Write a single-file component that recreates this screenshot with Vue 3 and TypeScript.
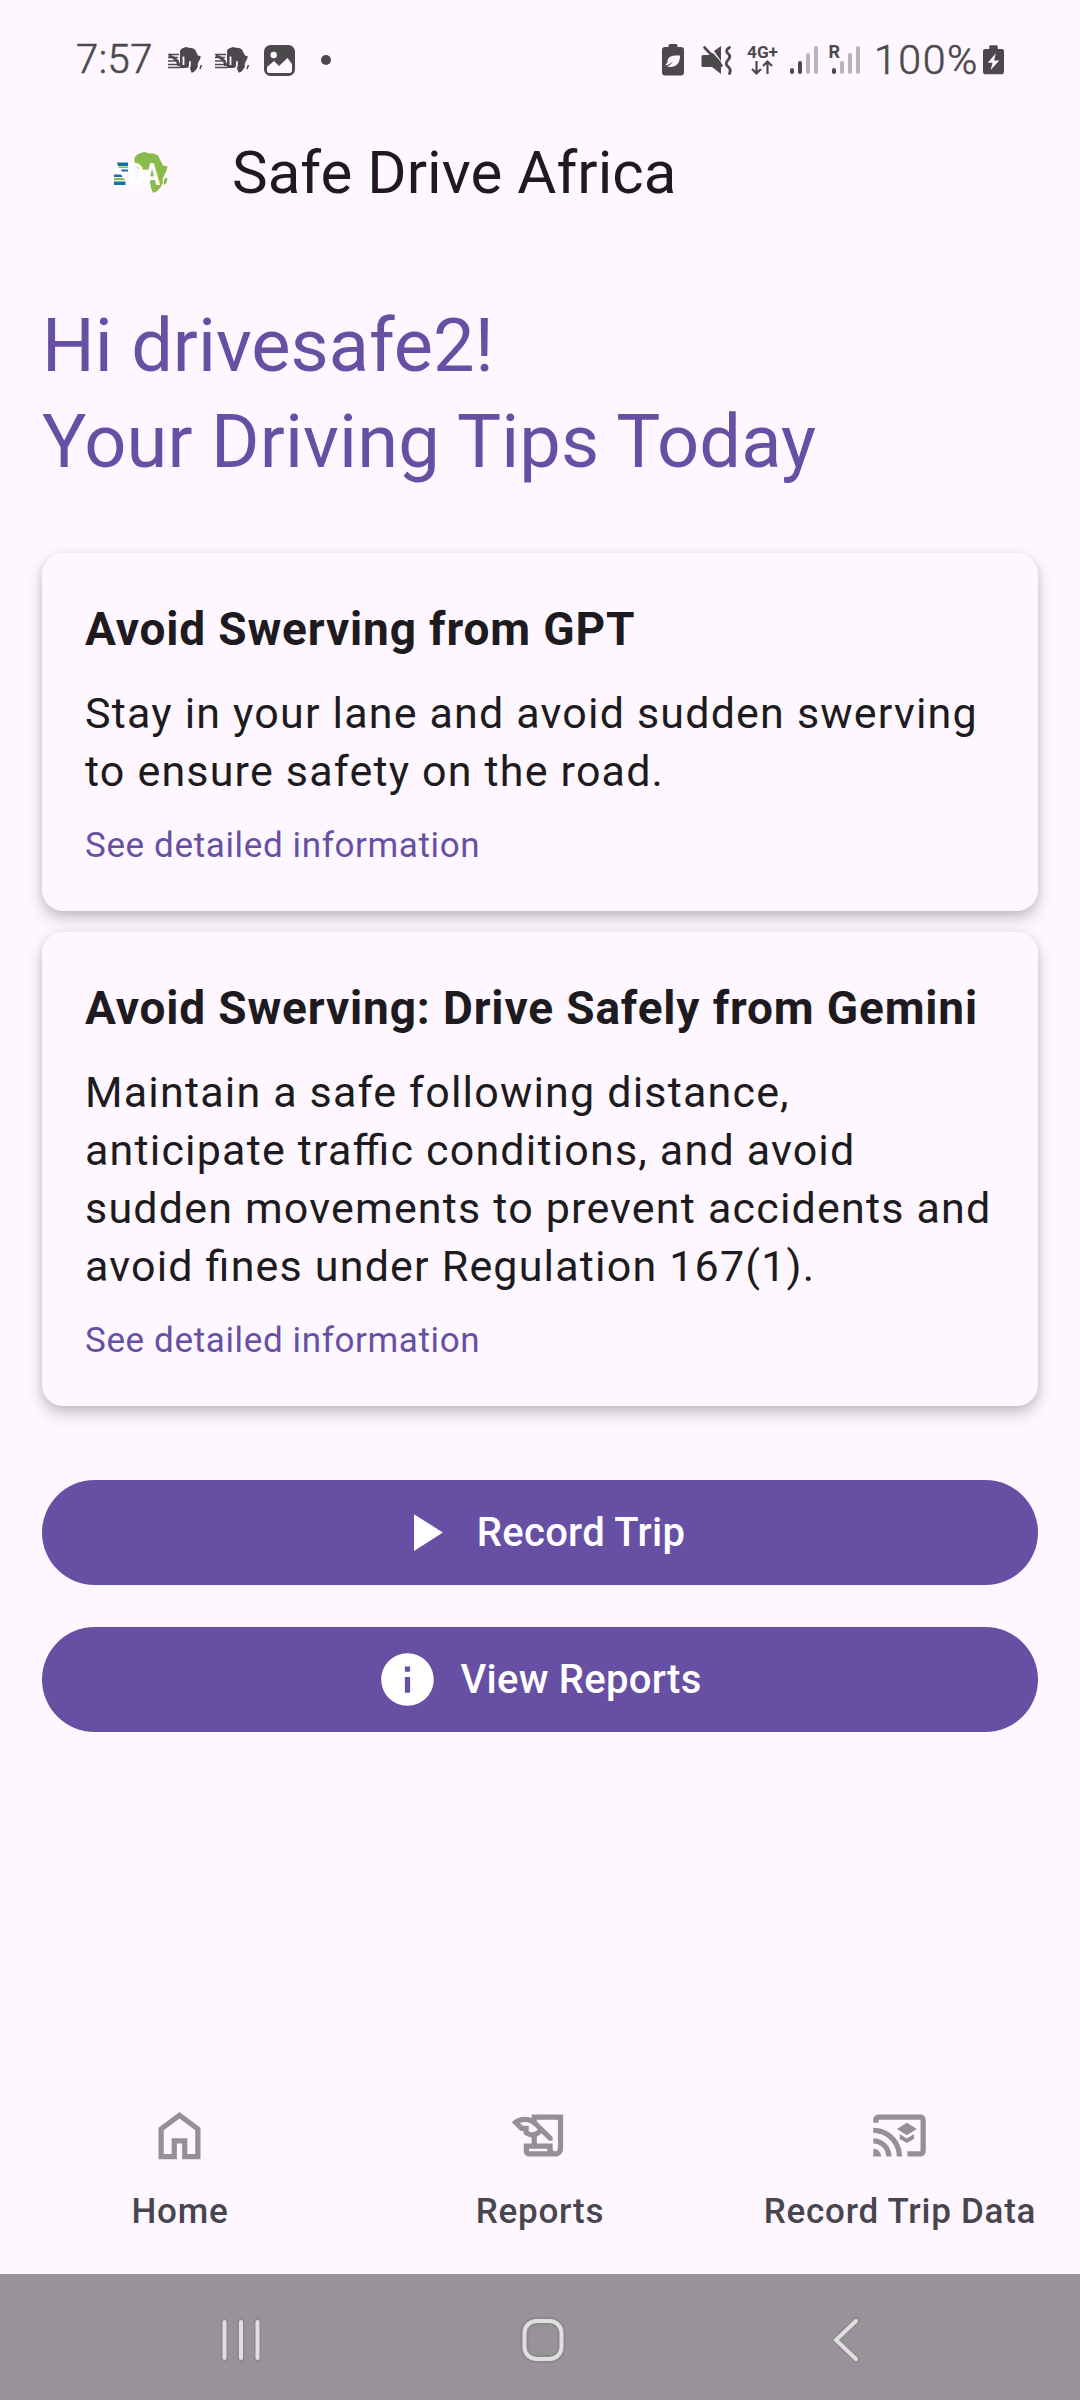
<script setup lang="ts">
interface Tip {
  title: string
  lines: string[]
}

const tips: Tip[] = [
  {
    title: 'Avoid Swerving from GPT',
    lines: ['Stay in your lane and avoid sudden swerving', 'to ensure safety on the road.']
  },
  {
    title: 'Avoid Swerving: Drive Safely from Gemini',
    lines: [
      'Maintain a safe following distance,',
      'anticipate traffic conditions, and avoid',
      'sudden movements to prevent accidents and',
      'avoid fines under Regulation 167(1).'
    ]
  }
]

interface Action {
  label: string
  icon: string
}

const actions: Action[] = [
  { label: 'Record Trip', icon: 'M8 5v14l11-7z' },
  {
    label: 'View Reports',
    icon: 'M12 2C6.48 2 2 6.48 2 12s4.48 10 10 10 10-4.48 10-10S17.52 2 12 2zm1 15h-2v-6h2v6zm0-8h-2V7h2v2z'
  }
]

const tabs: Action[] = [
  { label: 'Home', icon: 'M6 19h3v-6h6v6h3v-9l-6-4.5L6 10v9zm-2 2V9l8-6 8 6v12h-7v-6h-2v6H4z' },
  {
    label: 'Reports',
    icon: 'M9 4v1.38c-.83-.33-1.72-.5-2.61-.5-1.79 0-3.58.68-4.95 2.05l3.33 3.33h1.11v1.11c.86.86 1.98 1.31 3.11 1.36V15H6v3c0 1.1.9 2 2 2h10c1.66 0 3-1.34 3-3V4H9zm-1.11 6.41V8.26H5.61L4.57 7.22a5.07 5.07 0 0 1 1.82-.34c1.34 0 2.59.52 3.54 1.46l1.41 1.41-.2.2c-.51.51-1.19.8-1.92.8-.47 0-.93-.12-1.33-.34zM19 17c0 .55-.45 1-1 1s-1-.45-1-1v-2h-6v-2.59c.57-.23 1.1-.57 1.56-1.03l.2-.2L15.59 14H17v-1.41l-6-5.97V6h8v11zM8 17h7v1H8z'
  },
  {
    label: 'Record Trip Data',
    icon: 'M4 4h16c1.1 0 2 .9 2 2v12c0 1.1-.9 2-2 2h-5v-2h5V6H4v1.1H2V6c0-1.1.9-2 2-2zM2 17v3h3c0-1.66-1.34-3-3-3zM2 13v2c2.76 0 5 2.24 5 5h2c0-3.87-3.13-7-7-7zM2 9v2c4.97 0 9 4.03 9 9h2c0-6.08-4.92-11-11-11zM14.8 7.1L11 9.5l3.8 2.4 3.8-2.4zM12.1 11.4l2.7 1.7 2.7-1.7v1.9l-2.7 1.6-2.7-1.6z'
  }
]

const africa =
  'M0 9.500L0 5.500L3 2.500L6 1L10 0L14 1.200L19 1.400L23.500 3.500L26 8.500L28.500 13.500L33 14.500L32 19L29.500 23.500L28 27.500L28.500 31L25.500 36L22 39.500L18.500 41L16.500 36L15.500 30L16.500 26L14.500 21.500L13.500 17.500L5 18L1.500 14.500Z'
</script>

<template>
  <div class="screen">
    <header class="status">
      <span class="clock">7:57</span>
      <svg v-for="n in 2" :key="n" class="sda" viewBox="0 0 36 26">
        <path d="M1 7.500h11M1 10.500h10M1 14h11M1 17.500h12M1 20.500h12" stroke="#4c494d" stroke-width="1.700" />
        <path d="M2 8.500q10 4 9.500 10.500" stroke="#4c494d" stroke-width="2.600" fill="none" />
        <g transform="translate(13 0) scale(.63)"><path :d="africa" fill="#4c494d" /></g>
        <path d="M13 6.500h6q3 0 3 3v8.500q0 3-3 3h-6z" fill="#4c494d" />
        <path d="M16.500 9.500v8.500" stroke="#fef7ff" stroke-width="1.800" />
        <path d="M23.200 20v-6" stroke="#fef7ff" stroke-width="1" />
        <path d="M34.500 18l-1.500 4" stroke="#4c494d" stroke-width="1.600" />
      </svg>
      <svg class="photo" viewBox="0 0 31 31">
        <rect width="31" height="31" rx="6.500" fill="#4c494d" />
        <circle cx="9.700" cy="10" r="3.200" fill="#fef7ff" />
        <path d="M3 22l7-6 5 5 8.500-8 4.500 6v6.500q0 2.500-2.500 2.500h-20q-2.500 0-2.500-2.500z" fill="#fef7ff" />
      </svg>
      <span class="dot"></span>
      <span class="spacer"></span>
      <svg class="saver" viewBox="0 0 22 32">
        <path d="M6.500 3V1.500Q6.500 0 8 0h6q1.500 0 1.500 1.500V3H19q3 0 3 3v22.500q0 3-3 3H3q-3 0-3-3V6q0-3 3-3z" fill="#4c494d" />
        <path d="M18 11.500c-8-.5-13 1-12.500 7L3 21.500c4-.5 5-2 8-4-2 3-4 4-6 5 7 1.500 13-1 13-11z" fill="#fef7ff" />
      </svg>
      <svg class="mute" viewBox="0 0 31 31" fill="none" stroke="#4c494d" stroke-width="2.600" stroke-linecap="round">
        <path d="M2 10h7l3-2 8 9v12l-9-7H2q-1.500 0-1.500-1.500v-9Q.5 10 2 10z" fill="#4c494d" stroke="none" />
        <path d="M13 6l7-5v15z" fill="#4c494d" stroke="none" />
        <path d="M3.500 2.500l17 18" />
        <path d="M28.500 2.500q-5 3-1.500 6t0 6.500 0 6.500 1.500 7" stroke-width="2.800" />
      </svg>
      <svg class="net" viewBox="0 0 31 31">
        <text x="0" y="12.600" font-size="17" font-weight="700" textLength="31" lengthAdjust="spacingAndGlyphs">4G+</text>
        <path d="M9.500 16v12M5 24l4.500 4.500 4.500-4.500M20.500 29V17M16 21l4.500-4.500 4.500 4.500" fill="none" stroke="#4c494d" stroke-width="2.200" />
      </svg>
      <svg class="signal" viewBox="0 0 28 30" stroke-width="4" stroke-linecap="round">
        <path d="M2 25v2M10 18v9" stroke="#4c494d" />
        <path d="M18 10v17M26 3v24" stroke="#b9b4ba" />
      </svg>
      <svg class="roam" viewBox="0 0 31 30" stroke-width="4" stroke-linecap="round">
        <path d="M5 25v2" stroke="#4c494d" />
        <path d="M13 18v9M21 10v17M29 3v24" stroke="#b9b4ba" />
        <text x="-.5" y="12.800" font-size="18" font-weight="700">R</text>
      </svg>
      <span class="percent">100%</span>
      <svg class="charge" viewBox="0 0 22 31">
        <path d="M6.500 4V1.500Q6.500 0 8 0h6q1.500 0 1.500 1.500V4H20q2 0 2 2v21.500q0 3-3 3H3q-3 0-3-3V6q0-2 2-2z" fill="#4c494d" />
        <path d="M13.500 8.500L5 18.500h5l-2 7.500 9-10h-5.500z" fill="#fef7ff" />
      </svg>
    </header>

    <div class="appbar">
      <svg class="logo" viewBox="0 0 54 42">
        <g transform="translate(20.500 0)"><path :d="africa" fill="#8bba4c" /></g>
        <path d="M50 27l3.500-1.500-1 5.500-2.500 2z" fill="#8bba4c" />
        <text x="0" y="33" font-size="32" font-weight="700" textLength="46" lengthAdjust="spacingAndGlyphs" class="logo-text">SDA</text>
        <path d="M3 10.500h11v3.500H4zM7 17.500h7v2H8zM0 22.500h7l1.500 2.500H0zM0 29.500h11.500v3.500H0z" fill="#1272a5" />
        <path d="M4 14.500h10v1.500H5zM0 26h9l2.500 2.200H0z" fill="#8bba4c" />
      </svg>
      <span class="app-title">Safe Drive Africa</span>
    </div>

    <main class="content">
      <h1><span>Hi drivesafe2!</span><span class="wide">Your Driving Tips Today</span></h1>

      <section class="tips">
        <article v-for="tip in tips" :key="tip.title" class="card">
          <h2>{{ tip.title }}</h2>
          <p><span v-for="line in tip.lines" :key="line">{{ line }}</span></p>
          <a>See detailed information</a>
        </article>
      </section>

      <div class="actions">
        <button v-for="a in actions" :key="a.label" type="button">
          <svg viewBox="0 0 24 24"><path :d="a.icon" fill="#fff" /></svg>
          <span>{{ a.label }}</span>
        </button>
      </div>
    </main>

    <nav class="tabs">
      <div v-for="t in tabs" :key="t.label" class="tab">
        <svg viewBox="0 0 24 24"><path :d="t.icon" fill="#958f96" fill-rule="evenodd" /></svg>
        <span>{{ t.label }}</span>
      </div>
    </nav>

    <footer class="system">
      <svg class="recents" viewBox="0 0 44 50" fill="none" stroke-linecap="round">
        <path d="M5.500 7v36M22 7v36M38.500 7v36" stroke="#8d888d" stroke-width="7" />
        <path d="M5.500 7v36M22 7v36M38.500 7v36" stroke="#e0dfe0" stroke-width="4" />
      </svg>
      <svg class="home" viewBox="0 0 50 50" fill="none">
        <rect x="6.500" y="6" width="37" height="38" rx="12" stroke="#8d888d" stroke-width="8" />
        <rect x="6.500" y="6" width="37" height="38" rx="12" stroke="#e0dfe0" stroke-width="4" />
      </svg>
      <svg class="back" viewBox="0 0 34 50" fill="none" stroke-linecap="round">
        <path d="M27 6L7 25l20 19" stroke="#8d888d" stroke-width="7" />
        <path d="M27 6L7 25l20 19" stroke="#e0dfe0" stroke-width="4" />
      </svg>
    </footer>
  </div>
</template>

<style>
body {
  background: #fef7ff;
}
</style>

<style scoped>
.screen {
  display: flex;
  flex-direction: column;
  width: 1080px;
  height: 2400px;
  background: #fef7ff;
  color: #1d1b20;
  font-family: Roboto, sans-serif;
  overflow: hidden;
}
svg {
  display: block;
  flex: none;
  overflow: visible;
}
.status {
  display: flex;
  align-items: center;
  height: 120px;
  padding: 0 76px 0 76px;
  box-sizing: border-box;
  color: #4c494d;
}
.status text {
  fill: #4c494d;
  stroke: none;
}
.clock,
.percent {
  font-size: 40px;
  line-height: 40px;
  font-weight: 300;
  -webkit-text-stroke: 0.6px #4c494d;
  white-space: nowrap;
  margin-top: -1px;
}
.clock {
  width: 91px;
  letter-spacing: 0.5px;
}
.sda {
  width: 36px;
  height: 26px;
  margin-right: 11px;
}
.photo {
  width: 31px;
  height: 31px;
  margin-left: 3px;
}
.dot {
  width: 10px;
  height: 10px;
  margin-left: 26px;
  border-radius: 50%;
  background: #4c494d;
}
.spacer {
  flex: 1;
}
.saver {
  width: 22px;
  height: 32px;
  margin-right: 17px;
}
.mute {
  width: 31px;
  height: 31px;
  margin-right: 15px;
}
.net {
  width: 31px;
  height: 31px;
  margin-right: 12px;
}
.signal {
  width: 28px;
  height: 30px;
  margin-right: 11px;
}
.roam {
  width: 31px;
  height: 30px;
  margin-right: 14px;
}
.percent {
  width: 109px;
  font-size: 41px;
  letter-spacing: 1.6px;
}
.charge {
  width: 21px;
  height: 30px;
}
.appbar {
  display: flex;
  align-items: flex-start;
  height: 178px;
  padding: 23px 0 0 114px;
  box-sizing: border-box;
}
.logo {
  width: 54px;
  height: 42px;
  margin: 9px 64px 0 0;
}
.logo-text {
  fill: #fff;
}
.app-title {
  font-size: 60px;
  line-height: 60px;
  letter-spacing: 0.04px;
}
.content {
  flex: 1;
  padding: 0 42px;
}
h1 {
  margin: 0 0 63px;
  font-size: 74px;
  line-height: 96px;
  font-weight: 400;
  color: #6750a4;
}
h1 span {
  display: block;
}
h1 .wide {
  letter-spacing: 0.12px;
}
.tips {
  display: flex;
  flex-direction: column;
  gap: 21px;
}
.card {
  display: flex;
  flex-direction: column;
  gap: 21px;
  padding: 42px 42px 42px 43px;
  border-radius: 21px;
  background: #fef7ff;
  white-space: nowrap;
  font-feature-settings: 'liga' 1;
  box-shadow: 0 8px 16px rgba(0, 0, 0, 0.19), 0 2px 8px rgba(0, 0, 0, 0.1);
}
h2 {
  margin: 0;
  font-size: 46px;
  line-height: 68px;
  font-weight: 700;
  letter-spacing: 0.85px;
}
.card p {
  margin: 0;
  font-size: 43px;
  line-height: 58px;
  letter-spacing: 1.19px;
}
.card p span {
  display: block;
}
.card a {
  padding-top: 1px;
  font-size: 35px;
  line-height: 47px;
  letter-spacing: 0.63px;
  color: #6750a4;
}
.actions {
  display: flex;
  flex-direction: column;
  gap: 42px;
  margin-top: 74px;
}
button {
  display: flex;
  align-items: center;
  justify-content: center;
  gap: 21px;
  height: 105px;
  padding: 0 2px 0 0;
  border: 0;
  border-radius: 53px;
  background: #6750a4;
  color: #fff;
  font: 500 40px/54px Roboto, sans-serif;
  letter-spacing: 0.27px;
}
button svg {
  width: 63px;
  height: 63px;
}
.tabs {
  display: grid;
  grid-template-columns: repeat(3, 360px);
  height: 184px;
}
.tab {
  display: flex;
  flex-direction: column;
  align-items: center;
  padding-top: 14px;
}
.tab svg {
  width: 63px;
  height: 63px;
  margin-right: 2px;
}
.tab span {
  margin-top: 21px;
  font-size: 35px;
  line-height: 48px;
  font-weight: 500;
  letter-spacing: 0.74px;
  color: #49454f;
}
.system {
  display: flex;
  align-items: center;
  height: 126px;
  padding: 6px 0 0 219px;
  box-sizing: border-box;
  background: #989398;
}
.recents {
  width: 44px;
  height: 50px;
}
.home {
  width: 50px;
  height: 50px;
  margin-left: 255px;
}
.back {
  width: 34px;
  height: 50px;
  margin-left: 261px;
}
</style>
